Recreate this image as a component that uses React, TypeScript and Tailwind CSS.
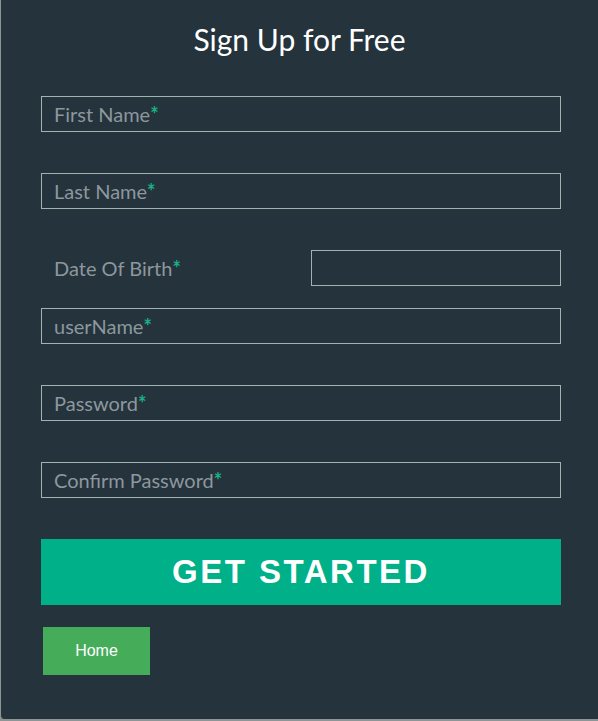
import React from 'react';

const font = { fontFamily: 'Lato, "Open Sans", sans-serif' };

function Field({ label }: { label: string }) {
  return (
    <div className="flex h-[36px] w-[520px] items-center border border-[#a0b3b0] pl-[12px] text-[20px] text-[#8d979c]">
      <span>{label}</span>
      <span className="font-bold text-[#1ab188]">*</span>
    </div>
  );
}

export default function App() {
  return (
    <div className="h-[721px] w-[598px] bg-[#8f9595]" style={font}>
      <div className="h-[719px] w-[598px] rounded-bl-[4px] border-l border-[#8f9595] bg-[#24333c] pl-[40px]">
        <h1 className="pt-[17px] pr-[40px] text-center text-[30px] font-normal leading-[44px] text-white">
          Sign Up for Free
        </h1>
        <div className="mt-[35px] flex flex-col">
          <Field label="First Name" />
          <div className="mt-[41px]">
            <Field label="Last Name" />
          </div>
          <div className="mt-[41px] flex h-[36px] w-[520px] items-center justify-between">
            <div className="pl-[13px] text-[20px] text-[#8d979c]">
              Date Of Birth<span className="font-bold text-[#1ab188]">*</span>
            </div>
            <div className="h-[36px] w-[250px] border border-[#a0b3b0]" />
          </div>
          <div className="mt-[22px]">
            <Field label="userName" />
          </div>
          <div className="mt-[41px]">
            <Field label="Password" />
          </div>
          <div className="mt-[41px]">
            <Field label="Confirm Password" />
          </div>
          <button
            className="mt-[41px] flex h-[66px] w-[520px] items-center justify-center bg-[#00b089] text-[33px] font-bold tracking-[2.5px] text-white"
            style={{ fontFamily: '"Liberation Sans", Arial, sans-serif' }}
          >
            GET STARTED
          </button>
          <button
            className="mt-[22px] ml-[2px] flex h-[48px] w-[107px] items-center justify-center bg-[#45ad5a] text-[16px] text-white"
            style={{ fontFamily: '"Liberation Sans", Arial, sans-serif' }}
          >
            Home
          </button>
        </div>
      </div>
    </div>
  );
}
